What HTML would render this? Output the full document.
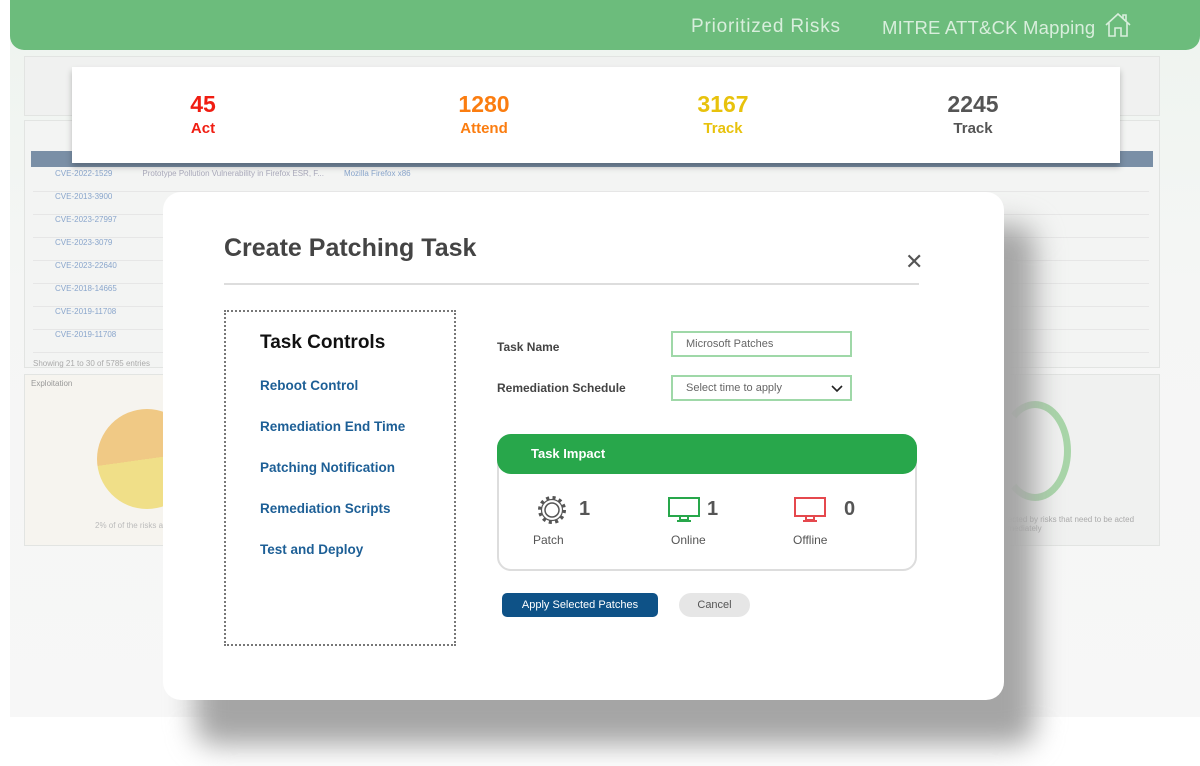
<!DOCTYPE html>
<html><head><meta charset="utf-8"><style>
*{box-sizing:border-box;margin:0;padding:0}
body{width:1200px;height:766px;background:#fff;font-family:"Liberation Sans",sans-serif;position:relative;overflow:hidden}
.abs{position:absolute}
.dash{left:10px;top:0;width:1190px;height:717px;background:linear-gradient(#eef4ef,#f5f6f5 40%,#f7f7f7)}
.hdr{left:10px;top:0;width:1190px;height:50px;background:#6cbc7c;border-radius:0 0 14px 14px;color:#d8eedc;font-size:19px}
.panel{background:#f0f1f0;border:1px solid #e2e4e2}
.row{font-size:8px;color:#aab;height:23px;border-bottom:1px solid #e6e6e6}
.stats{left:72px;top:67px;width:1048px;height:96px;background:#fff;box-shadow:0 4px 6px rgba(0,0,0,.25)}
.st{position:absolute;top:24px;width:200px;text-align:center;font-weight:bold}
.st b{display:block;font-size:23px}
.st span{display:block;font-size:15px;margin-top:2px}
.shadow{left:195px;top:225px;width:840px;height:520px;background:#a5a5a5;border-radius:20px;filter:blur(14px)}
.modal{left:163px;top:192px;width:841px;height:508px;background:#fff;border-radius:18px}
.tc{left:224px;top:310px;width:232px;height:336px;border:2px dotted #777}
.tc a{position:absolute;left:34px;color:#1d5f96;font-weight:bold;font-size:13.5px;text-decoration:none}
.lbl{font-size:12px;font-weight:bold;color:#444}
.inp{border:2px solid #9fd8a8;font-size:11px;color:#666;padding:0 13px;line-height:22px}
</style></head><body>
<div class="abs dash"></div>
<div class="abs hdr"><span class="abs" style="left:681px;top:16px;letter-spacing:0.8px">Prioritized Risks</span><span class="abs" style="left:872px;top:17px;letter-spacing:0.2px;font-size:18.5px">MITRE ATT&amp;CK Mapping</span>
<svg class="abs" style="left:1093px;top:12px" width="30" height="26" viewBox="0 0 30 26" fill="none" stroke="#d8eedc" stroke-width="1.6"><path d="M3 13 L15 2 L27 13 M6 11 V24 H12 V16 H18 V24 H24 V11 M20 6 V3 H23 V9"/></svg></div>
<div class="abs panel" style="left:24px;top:56px;width:1136px;height:60px"></div>
<div class="abs panel" style="left:24px;top:120px;width:1136px;height:248px;background:#f3f4f3">
<div class="abs" style="left:6px;top:30px;width:1122px;height:16px;background:#7a8fa6"></div>
<div class="abs" style="left:8px;top:48px;width:1116px">
<div class="row"><span style="color:#8aa6cc;margin-left:22px">CVE-2022-1529</span><span style="margin-left:30px">Prototype Pollution Vulnerability in Firefox ESR, F...</span><span style="margin-left:20px;color:#8aa6cc">Mozilla Firefox x86</span></div>
<div class="row"><span style="color:#8aa6cc;margin-left:22px">CVE-2013-3900</span></div>
<div class="row"><span style="color:#8aa6cc;margin-left:22px">CVE-2023-27997</span></div>
<div class="row"><span style="color:#8aa6cc;margin-left:22px">CVE-2023-3079</span></div>
<div class="row"><span style="color:#8aa6cc;margin-left:22px">CVE-2023-22640</span></div>
<div class="row"><span style="color:#8aa6cc;margin-left:22px">CVE-2018-14665</span></div>
<div class="row"><span style="color:#8aa6cc;margin-left:22px">CVE-2019-11708</span></div>
<div class="row"><span style="color:#8aa6cc;margin-left:22px">CVE-2019-11708</span></div>
<div style="font-size:8px;color:#aaa;margin-top:6px">Showing 21 to 30 of 5785 entries</div></div></div>
<div class="abs panel" style="left:24px;top:374px;width:430px;height:172px;background:#f6f4ef"><span style="font-size:8px;color:#999;position:absolute;left:6px;top:4px">Exploitation</span>
<div class="abs" style="left:72px;top:34px;width:100px;height:100px;border-radius:50%;background:linear-gradient(172deg,#f0c985 50%,#f0df88 50%)"></div>
<span style="font-size:8px;color:#bbb;position:absolute;left:70px;top:146px">2% of of the risks a</span></div>
<div class="abs panel" style="left:990px;top:374px;width:170px;height:172px">
<div class="abs" style="left:8px;top:26px;width:72px;height:100px;border:7px solid #a8d5a8;border-radius:50%;border-left-color:transparent"></div>
<span style="font-size:8px;color:#aaa;position:absolute;left:8px;top:140px">affected by risks that need to be acted immediately</span></div>
<div class="abs stats">
<div class="st" style="left:31px;color:#f01d12"><b>45</b><span>Act</span></div>
<div class="st" style="left:312px;color:#fb7d10"><b>1280</b><span>Attend</span></div>
<div class="st" style="left:551px;color:#e8c20c"><b>3167</b><span>Track</span></div>
<div class="st" style="left:801px;color:#555"><b>2245</b><span>Track</span></div></div>
<div class="abs shadow"></div>
<div class="abs modal"></div>
<div class="abs" style="left:224px;top:234px;font-size:25px;font-weight:bold;color:#444">Create Patching Task</div>
<div class="abs" style="left:905px;top:252px;font-size:22px;color:#555;line-height:20px">✕</div>
<div class="abs" style="left:224px;top:283px;width:695px;height:2px;background:#ddd"></div>
<div class="abs tc"><div class="abs" style="left:34px;top:20px;font-size:19px;font-weight:bold;color:#111">Task Controls</div>
<a style="top:66px">Reboot Control</a><a style="top:107px">Remediation End Time</a><a style="top:148px">Patching Notification</a><a style="top:189px">Remediation Scripts</a><a style="top:230px">Test and Deploy</a></div>
<div class="abs lbl" style="left:497px;top:340px">Task Name</div>
<div class="abs lbl" style="left:497px;top:381px">Remediation Schedule</div>
<div class="abs inp" style="left:671px;top:331px;width:181px;height:26px">Microsoft Patches</div>
<div class="abs inp" style="left:671px;top:375px;width:181px;height:26px">Select time to apply<svg class="abs" style="left:158px;top:8px" width="12" height="8"><path d="M1 1 L6 6 L11 1" stroke="#222" stroke-width="1.6" fill="none"/></svg></div>
<div class="abs" style="left:497px;top:434px;width:420px;height:137px;border:2px solid #ddd;border-radius:14px"></div>
<div class="abs" style="left:497px;top:434px;width:420px;height:40px;background:#28a74b;border-radius:14px;color:#fff;font-weight:bold;font-size:13px;padding:12px 0 0 34px">Task Impact</div>
<svg class="abs" style="left:535px;top:493px" width="34" height="34" viewBox="0 0 34 34"><circle cx="17" cy="17" r="12" fill="none" stroke="#555" stroke-width="4" stroke-dasharray="3 3.3"/><circle cx="17" cy="17" r="10.5" fill="#fff" stroke="#555" stroke-width="1.2"/><circle cx="17" cy="17" r="7" fill="none" stroke="#555" stroke-width="1.5"/></svg>
<div class="abs" style="left:579px;top:498px;font-size:20px;font-weight:bold;color:#555">1</div>
<div class="abs" style="left:533px;top:533px;font-size:12px;color:#555">Patch</div>
<svg class="abs" style="left:668px;top:497px" width="32" height="26"><rect x="1" y="1" width="30" height="18" fill="none" stroke="#28a74b" stroke-width="2"/><path d="M12 20v3h8v-3 M9 24h14" stroke="#28a74b" stroke-width="2" fill="none"/></svg>
<div class="abs" style="left:707px;top:498px;font-size:20px;font-weight:bold;color:#555">1</div>
<div class="abs" style="left:671px;top:533px;font-size:12px;color:#555">Online</div>
<svg class="abs" style="left:794px;top:497px" width="32" height="26"><rect x="1" y="1" width="30" height="18" fill="none" stroke="#e5484d" stroke-width="2"/><path d="M12 20v3h8v-3 M9 24h14" stroke="#e5484d" stroke-width="2" fill="none"/></svg>
<div class="abs" style="left:844px;top:498px;font-size:20px;font-weight:bold;color:#555">0</div>
<div class="abs" style="left:793px;top:533px;font-size:12px;color:#555">Offline</div>
<div class="abs" style="left:502px;top:593px;width:156px;height:24px;background:#0e5287;border-radius:5px;color:#fff;font-size:11px;text-align:center;line-height:24px">Apply Selected Patches</div>
<div class="abs" style="left:679px;top:593px;width:71px;height:24px;background:#e6e6e6;border-radius:12px;color:#555;font-size:11px;text-align:center;line-height:24px">Cancel</div>
</body></html>
